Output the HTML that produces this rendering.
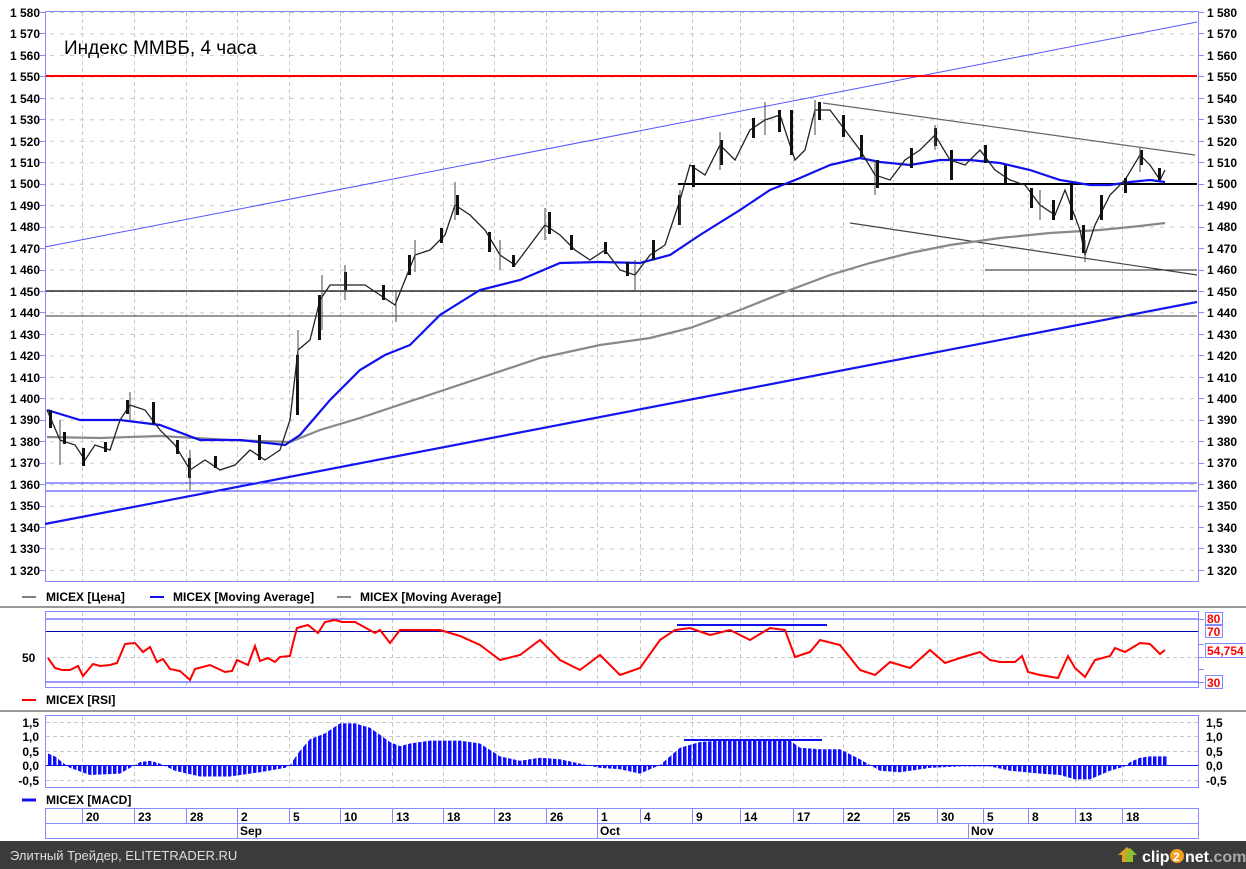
<!DOCTYPE html>
<html><head><meta charset="utf-8"><style>
html,body{margin:0;padding:0;background:#fff;width:1246px;height:869px;overflow:hidden}
svg text{font-family:"Liberation Sans",sans-serif;font-weight:bold;font-size:12px;fill:#000}
</style></head><body>
<svg width="1246" height="869" viewBox="0 0 1246 869" xmlns="http://www.w3.org/2000/svg">
<defs>
<pattern id="hg" x="0" y="12" width="10" height="21.46" patternUnits="userSpaceOnUse">
<line x1="0" y1="0.5" x2="4" y2="0.5" stroke="#c8c8c8" stroke-width="1"/>
</pattern>
<pattern id="bars" x="48" y="0" width="5" height="10" patternUnits="userSpaceOnUse">
<rect x="0" y="0" width="3.5" height="10" fill="#1010ff"/>
</pattern>
</defs>
<rect x="0" y="0" width="1246" height="869" fill="#fff"/>
<rect x="45.5" y="11.5" width="1153" height="570" fill="url(#hg)"/>
<g stroke="#c8c8c8" stroke-dasharray="4,3" stroke-width="1">
<path d="M82.5 12V581M134.5 12V581M186.5 12V581M237.5 12V581M289.5 12V581M340.5 12V581M392.5 12V581M443.5 12V581M494.5 12V581M546.5 12V581M597.5 12V581M640.5 12V581M692.5 12V581M740.5 12V581M793.5 12V581M843.5 12V581M893.5 12V581M937.5 12V581M983.5 12V581M1028.5 12V581M1075.5 12V581M1122.5 12V581"/>
<path d="M82.5 612V687M134.5 612V687M186.5 612V687M237.5 612V687M289.5 612V687M340.5 612V687M392.5 612V687M443.5 612V687M494.5 612V687M546.5 612V687M597.5 612V687M640.5 612V687M692.5 612V687M740.5 612V687M793.5 612V687M843.5 612V687M893.5 612V687M937.5 612V687M983.5 612V687M1028.5 612V687M1075.5 612V687M1122.5 612V687"/>
<path d="M82.5 716V787M134.5 716V787M186.5 716V787M237.5 716V787M289.5 716V787M340.5 716V787M392.5 716V787M443.5 716V787M494.5 716V787M546.5 716V787M597.5 716V787M640.5 716V787M692.5 716V787M740.5 716V787M793.5 716V787M843.5 716V787M893.5 716V787M937.5 716V787M983.5 716V787M1028.5 716V787M1075.5 716V787M1122.5 716V787"/>
<path d="M46 657.5H1198M46 722.5H1198M46 736.5H1198M46 751.5H1198M46 780.5H1198"/>
</g>
<rect x="45.5" y="11.5" width="1153" height="570" fill="none" stroke="#8888ff"/>
<text x="64" y="54" style="font-weight:normal;font-size:19px">Индекс ММВБ, 4 часа</text>
<line x1="45" y1="247" x2="1197" y2="22" stroke="#5555ff" stroke-width="1"/>
<line x1="45" y1="524" x2="1197" y2="302" stroke="#1515ee" stroke-width="2.2"/>
<line x1="46" y1="76" x2="1197" y2="76" stroke="#ff0000" stroke-width="2"/>
<line x1="678" y1="184" x2="1197" y2="184" stroke="#000" stroke-width="2"/>
<line x1="46" y1="291" x2="1197" y2="291" stroke="#000" stroke-width="1.2"/>
<line x1="46" y1="316" x2="1197" y2="316" stroke="#333" stroke-width="1"/>
<line x1="46" y1="483" x2="1197" y2="483" stroke="#3333ff" stroke-width="1"/>
<line x1="46" y1="491" x2="1197" y2="491" stroke="#3333ff" stroke-width="1"/>
<line x1="823" y1="103" x2="1195" y2="155" stroke="#666" stroke-width="1.2"/>
<line x1="850" y1="223" x2="1197" y2="275" stroke="#444" stroke-width="1.2"/>
<line x1="985" y1="270" x2="1197" y2="270" stroke="#222" stroke-width="1"/>
<polyline fill="none" stroke="#888" stroke-width="2.2" points="47,437 100,438 160,436 230,440 290,442 320,430 360,418 420,398 480,378 540,358 600,345 650,338 690,328 740,310 790,290 830,275 870,263 910,253 950,245 1000,238 1050,233 1100,230 1140,226 1165,223"/>
<polyline fill="none" stroke="#1010ee" stroke-width="2.2" points="47,410 80,420 120,420 160,425 200,440 240,440 285,445 300,435 330,400 360,370 385,355 410,345 440,315 480,290 520,280 560,263 600,262 640,263 670,255 700,235 740,210 770,190 800,178 830,165 860,158 880,162 910,165 940,160 970,160 1000,163 1030,170 1060,180 1090,185 1110,185 1130,182 1150,180 1165,182"/>
<polyline fill="none" stroke="#222" stroke-width="1.3" points="47,410 60,440 75,445 85,460 95,445 110,450 120,420 130,405 145,410 160,430 175,445 190,470 205,460 220,470 235,465 250,450 265,460 280,450 290,420 298,350 310,340 320,300 330,285 345,285 365,285 380,295 395,305 405,280 415,255 430,250 445,235 455,205 470,215 485,230 500,255 515,265 530,245 545,225 560,235 575,250 590,260 605,250 620,270 635,275 650,255 665,245 680,200 690,165 705,175 720,145 735,160 750,130 765,120 780,115 795,160 805,150 815,110 830,110 845,130 860,150 875,175 890,180 905,160 920,150 935,135 950,160 965,165 980,150 995,170 1010,180 1025,185 1040,205 1055,215 1065,190 1080,230 1085,255 1095,225 1110,195 1125,180 1140,155 1150,165 1160,180 1165,170"/>
<g fill="#111">
<rect x="49" y="410" width="3" height="18"/><rect x="63" y="432" width="3" height="12"/><rect x="82" y="448" width="3" height="18"/><rect x="104" y="442" width="3" height="10"/><rect x="126" y="400" width="3" height="14"/><rect x="152" y="402" width="3" height="22"/><rect x="176" y="440" width="3" height="14"/><rect x="188" y="458" width="3" height="20"/><rect x="214" y="456" width="3" height="12"/><rect x="258" y="435" width="3" height="25"/><rect x="296" y="355" width="3" height="60"/><rect x="318" y="295" width="3" height="45"/><rect x="344" y="272" width="3" height="18"/><rect x="382" y="285" width="3" height="15"/><rect x="408" y="255" width="3" height="20"/><rect x="440" y="228" width="3" height="15"/><rect x="456" y="195" width="3" height="20"/><rect x="488" y="232" width="3" height="20"/><rect x="512" y="255" width="3" height="12"/><rect x="548" y="212" width="3" height="22"/><rect x="570" y="235" width="3" height="15"/><rect x="604" y="242" width="3" height="12"/><rect x="626" y="262" width="3" height="14"/><rect x="652" y="240" width="3" height="20"/><rect x="678" y="195" width="3" height="30"/><rect x="692" y="165" width="3" height="22"/><rect x="720" y="140" width="3" height="25"/><rect x="752" y="118" width="3" height="20"/><rect x="778" y="110" width="3" height="22"/><rect x="790" y="110" width="3" height="45"/><rect x="818" y="102" width="3" height="18"/><rect x="842" y="115" width="3" height="22"/><rect x="860" y="135" width="3" height="22"/><rect x="876" y="160" width="3" height="28"/><rect x="910" y="148" width="3" height="20"/><rect x="934" y="128" width="3" height="18"/><rect x="950" y="150" width="3" height="30"/><rect x="984" y="145" width="3" height="18"/><rect x="1004" y="165" width="3" height="18"/><rect x="1030" y="188" width="3" height="20"/><rect x="1052" y="200" width="3" height="20"/><rect x="1070" y="185" width="3" height="35"/><rect x="1082" y="225" width="3" height="28"/><rect x="1100" y="195" width="3" height="25"/><rect x="1124" y="178" width="3" height="15"/><rect x="1140" y="150" width="3" height="15"/><rect x="1158" y="168" width="3" height="12"/>
</g>
<g stroke="#444" stroke-width="1"><path d="M60 420V465M130 392V420M190 450V490M298 330V380M322 275V330M345 265V300M396 290V322M415 240V272M455 182V220M500 240V270M545 208V240M635 260V290M680 190V225M720 132V170M765 102V135M815 100V135M875 160V195M935 125V150M1040 190V220M1085 240V262M1140 148V172"/></g>
<g text-anchor="end">
<text x="40" y="17">1 580</text><text x="40" y="38">1 570</text><text x="40" y="60">1 560</text><text x="40" y="81">1 550</text><text x="40" y="103">1 540</text><text x="40" y="124">1 530</text><text x="40" y="146">1 520</text><text x="40" y="167">1 510</text><text x="40" y="188">1 500</text><text x="40" y="210">1 490</text><text x="40" y="231">1 480</text><text x="40" y="253">1 470</text><text x="40" y="274">1 460</text><text x="40" y="296">1 450</text><text x="40" y="317">1 440</text><text x="40" y="339">1 430</text><text x="40" y="360">1 420</text><text x="40" y="382">1 410</text><text x="40" y="403">1 400</text><text x="40" y="424">1 390</text><text x="40" y="446">1 380</text><text x="40" y="467">1 370</text><text x="40" y="489">1 360</text><text x="40" y="510">1 350</text><text x="40" y="532">1 340</text><text x="40" y="553">1 330</text><text x="40" y="575">1 320</text>
</g>
<g>
<text x="1207" y="17">1 580</text><text x="1207" y="38">1 570</text><text x="1207" y="60">1 560</text><text x="1207" y="81">1 550</text><text x="1207" y="103">1 540</text><text x="1207" y="124">1 530</text><text x="1207" y="146">1 520</text><text x="1207" y="167">1 510</text><text x="1207" y="188">1 500</text><text x="1207" y="210">1 490</text><text x="1207" y="231">1 480</text><text x="1207" y="253">1 470</text><text x="1207" y="274">1 460</text><text x="1207" y="296">1 450</text><text x="1207" y="317">1 440</text><text x="1207" y="339">1 430</text><text x="1207" y="360">1 420</text><text x="1207" y="382">1 410</text><text x="1207" y="403">1 400</text><text x="1207" y="424">1 390</text><text x="1207" y="446">1 380</text><text x="1207" y="467">1 370</text><text x="1207" y="489">1 360</text><text x="1207" y="510">1 350</text><text x="1207" y="532">1 340</text><text x="1207" y="553">1 330</text><text x="1207" y="575">1 320</text>
</g>
<g stroke="#8888ff"><path d="M40 12.5H45M40 33.5H45M40 55.5H45M40 76.5H45M40 98.5H45M40 119.5H45M40 141.5H45M40 162.5H45M40 184.5H45M40 205.5H45M40 227.5H45M40 248.5H45M40 270.5H45M40 291.5H45M40 312.5H45M40 334.5H45M40 355.5H45M40 377.5H45M40 398.5H45M40 420.5H45M40 441.5H45M40 463.5H45M40 484.5H45M40 506.5H45M40 527.5H45M40 548.5H45M40 570.5H45"/>
<path d="M1199 12.5H1204M1199 33.5H1204M1199 55.5H1204M1199 76.5H1204M1199 98.5H1204M1199 119.5H1204M1199 141.5H1204M1199 162.5H1204M1199 184.5H1204M1199 205.5H1204M1199 227.5H1204M1199 248.5H1204M1199 270.5H1204M1199 291.5H1204M1199 312.5H1204M1199 334.5H1204M1199 355.5H1204M1199 377.5H1204M1199 398.5H1204M1199 420.5H1204M1199 441.5H1204M1199 463.5H1204M1199 484.5H1204M1199 506.5H1204M1199 527.5H1204M1199 548.5H1204M1199 570.5H1204"/></g>
<line x1="22" y1="597" x2="36" y2="597" stroke="#000"/>
<text x="46" y="601">MICEX [Цена]</text>
<line x1="150" y1="597" x2="164" y2="597" stroke="#1010ee" stroke-width="2"/>
<text x="173" y="601">MICEX [Moving Average]</text>
<line x1="337" y1="597" x2="351" y2="597" stroke="#888" stroke-width="2"/>
<text x="360" y="601">MICEX [Moving Average]</text>
<rect x="0" y="606" width="1246" height="2" fill="#999"/>
<rect x="45.5" y="611.5" width="1153" height="76" fill="none" stroke="#8888ff"/>
<line x1="46" y1="619" x2="1198" y2="619" stroke="#3333ff"/>
<line x1="46" y1="631.5" x2="1198" y2="631.5" stroke="#0000aa"/>
<line x1="46" y1="682" x2="1198" y2="682" stroke="#3333ff"/>
<line x1="677" y1="625" x2="827" y2="625" stroke="#1010ee" stroke-width="2"/>
<polyline fill="none" stroke="#ff0000" stroke-width="2" points="48,658 55,668 62,670 70,670 78,666 83,676 93,664 100,666 110,665 117,663 125,644 135,643 143,652 150,647 157,662 163,659 170,669 180,671 190,680 195,669 210,665 225,672 232,671 237,660 248,665 255,646 260,661 268,658 275,662 280,657 290,656 293,643 297,628 308,625 318,633 325,622 335,620 342,622 355,622 375,633 380,630 390,643 400,630 420,630 440,630 460,636 480,645 500,660 520,655 540,640 560,660 580,670 600,655 620,675 640,668 660,640 675,630 690,628 710,635 730,630 750,640 770,628 785,630 795,657 810,652 820,640 840,645 860,670 875,675 890,662 910,668 930,650 945,663 960,658 980,652 990,660 1000,662 1015,662 1022,656 1028,672 1040,675 1058,678 1068,656 1075,668 1085,677 1095,660 1110,656 1115,648 1125,652 1140,643 1150,644 1160,654 1165,650"/>
<text x="22" y="662">50</text>
<g stroke="#8888ff"><path d="M1199 619.5H1204M1199 644.5H1204M1199 657.5H1204M1199 669.5H1204M1199 682.5H1204"/></g>
<g fill="#fff" stroke="#8888ff"><rect x="1205.5" y="612.5" width="17" height="12"/><rect x="1205.5" y="625.5" width="17" height="12"/><rect x="1205.5" y="675.5" width="17" height="13"/><rect x="1205.5" y="643.5" width="41" height="14"/></g>
<text x="1207" y="623" style="fill:#f00">80</text><text x="1207" y="636" style="fill:#f00">70</text><text x="1207" y="687" style="fill:#f00">30</text><text x="1207" y="655" style="fill:#f00">54,754</text>
<line x1="22" y1="700" x2="36" y2="700" stroke="#f00" stroke-width="2"/>
<text x="46" y="704">MICEX [RSI]</text>
<rect x="0" y="710" width="1246" height="2" fill="#999"/>
<rect x="45.5" y="715.5" width="1153" height="72" fill="none" stroke="#8888ff"/>
<polygon fill="url(#bars)" points="48,765 48,753.5 55,756.4 62,762.1 70,767.9 90,775 120,773.6 130,767.9 140,762.1 150,760.7 160,763.6 175,770.7 200,776.5 230,776.5 260,772.2 285,767.9 290,765 300,750.7 310,739.2 325,733.4 340,723.4 355,723.4 370,727.7 390,742 400,746.3 410,743.5 430,740.6 460,740.6 480,743.5 500,756.4 520,760.7 540,757.8 560,759.3 580,763.6 600,767.9 620,769.3 640,773.6 660,765 680,747.8 700,742 720,740.6 760,739.2 790,740.6 800,747.8 820,749.2 840,749.2 860,759.3 880,770.7 900,772.2 930,767.9 960,766.4 990,766.4 1010,770.7 1040,773.6 1060,775 1075,779.4 1090,779.4 1110,770.7 1125,766.4 1130,762.1 1140,757.8 1150,756.4 1168,756.4 1168,765"/>
<line x1="46" y1="765.5" x2="1198" y2="765.5" stroke="#1010ee"/>
<line x1="684" y1="740" x2="822" y2="740" stroke="#1010ee" stroke-width="2"/>
<g text-anchor="end"><text x="39" y="727">1,5</text><text x="39" y="741">1,0</text><text x="39" y="756">0,5</text><text x="39" y="770">0,0</text><text x="39" y="785">-0,5</text></g>
<g><text x="1206" y="727">1,5</text><text x="1206" y="741">1,0</text><text x="1206" y="756">0,5</text><text x="1206" y="770">0,0</text><text x="1206" y="785">-0,5</text></g>
<line x1="22" y1="800" x2="36" y2="800" stroke="#1010ee" stroke-width="3"/>
<text x="46" y="804">MICEX [MACD]</text>
<g fill="none" stroke="#8888ff">
<rect x="45.5" y="808.5" width="1153" height="30"/>
<path d="M46 823.5H1198M82.5 809V824M134.5 809V824M186.5 809V824M237.5 809V839M289.5 809V824M340.5 809V824M392.5 809V824M443.5 809V824M494.5 809V824M546.5 809V824M597.5 809V839M640.5 809V824M692.5 809V824M740.5 809V824M793.5 809V824M843.5 809V824M893.5 809V824M937.5 809V824M983.5 809V824M968.5 824V839M1028.5 809V824M1075.5 809V824M1122.5 809V824"/>
</g>
<g><text x="86" y="821">20</text><text x="138" y="821">23</text><text x="190" y="821">28</text><text x="241" y="821">2</text><text x="293" y="821">5</text><text x="344" y="821">10</text><text x="396" y="821">13</text><text x="447" y="821">18</text><text x="498" y="821">23</text><text x="550" y="821">26</text><text x="601" y="821">1</text><text x="644" y="821">4</text><text x="696" y="821">9</text><text x="744" y="821">14</text><text x="797" y="821">17</text><text x="847" y="821">22</text><text x="897" y="821">25</text><text x="941" y="821">30</text><text x="987" y="821">5</text><text x="1032" y="821">8</text><text x="1079" y="821">13</text><text x="1126" y="821">18</text>
<text x="240" y="835">Sep</text><text x="600" y="835">Oct</text><text x="971" y="835">Nov</text></g>
<rect x="0" y="841" width="1246" height="28" fill="#3b3b3b"/>
<text x="10" y="860" style="fill:#ddd;font-weight:normal;font-size:13px">Элитный Трейдер, ELITETRADER.RU</text>
<path d="M1122 862h10v-7h4l-9-8-9 8h4z" fill="#e0a020"/>
<path d="M1126 862h7v-7h4l-7-7-4 4z" fill="#8ec030"/>
<text x="1142" y="862" style="fill:#fff;font-size:16px">clip</text>
<circle cx="1177" cy="856" r="7" fill="#f0a020"/>
<text x="1173" y="861" style="fill:#fff;font-size:12px">2</text>
<text x="1185" y="862" style="fill:#fff;font-size:16px">net<tspan style="fill:#aaa">.com</tspan></text>
</svg>
</body></html>
